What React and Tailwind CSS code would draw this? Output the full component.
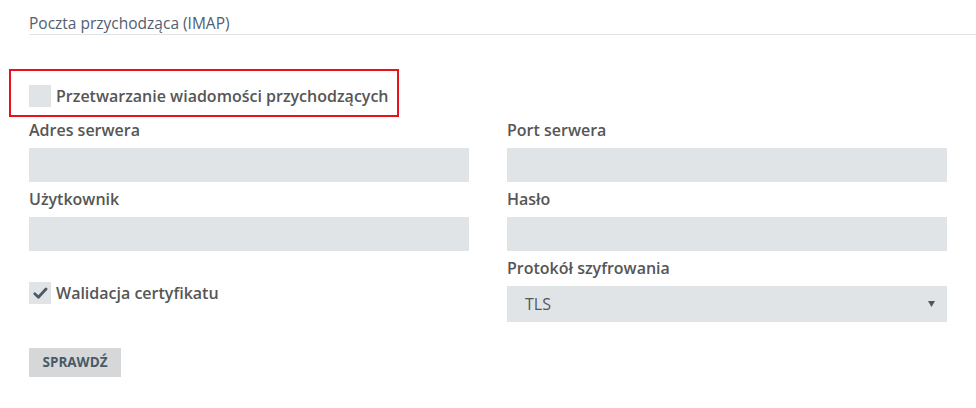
function Checkbox({ checked }) {
  return (
    <span className="flex h-[22px] w-[22px] shrink-0 items-center justify-center bg-[#e1e4e6]">
      {checked && (
        <svg width="15" height="12" viewBox="0 0 15 12" fill="none">
          <path d="M1.8 6.8 L5.4 10.2 L13 2" stroke="#4b5a64" strokeWidth="2.8" strokeLinecap="round" strokeLinejoin="round" />
        </svg>
      )}
    </span>
  );
}

function Field({ label, children }) {
  return (
    <div>
      <label className="block text-[16px] font-semibold leading-6 text-[#565656]">{label}</label>
      <div className="mt-[6px]">{children}</div>
    </div>
  );
}

function TextInput() {
  return <input type="text" className="block h-[34px] w-full bg-[#e1e4e6] px-3 outline-none" />;
}

export default function App() {
  return (
    <div className="min-h-[408px] w-[976px] bg-white font-['Open_Sans',sans-serif]">
      <div className="ml-[29px] border-b border-[#e3e3e3] pt-[13px] pb-[1px]">
        <h3 className="text-[15.5px] font-normal leading-5 text-[#51606f]">Poczta przychodząca (IMAP)</h3>
      </div>

      <div className="ml-[9px] mt-[34px] flex h-[48px] w-[390px] items-start border-2 border-[#e8101a] pl-[18px] pt-[13px]">
        <label className="flex items-center gap-[5px]">
          <Checkbox />
          <span className="text-[16px] font-semibold leading-6 text-[#565656]">Przetwarzanie wiadomości przychodzących</span>
        </label>
      </div>

      <div className="mt-[1px] grid grid-cols-2 gap-x-[38px] gap-y-[5px] pl-[29px] pr-[29px]">
        <Field label="Adres serwera">
          <TextInput />
        </Field>
        <Field label="Port serwera">
          <TextInput />
        </Field>
        <Field label="Użytkownik">
          <TextInput />
        </Field>
        <Field label="Hasło">
          <TextInput />
        </Field>
        <div className="pt-[25px]">
          <label className="flex items-center gap-[5px]">
            <Checkbox checked />
            <span className="text-[16px] font-semibold leading-6 text-[#565656]">Walidacja certyfikatu</span>
          </label>
        </div>
        <Field label="Protokół szyfrowania">
          <div className="flex h-[36px] w-full items-center justify-between bg-[#e1e4e6] pl-[18px] pr-[12px]">
            <span className="text-[16px] leading-5 text-[#565656]">TLS</span>
            <svg width="7" height="6" viewBox="0 0 7 6">
              <polygon points="0,0 7,0 3.5,6" fill="#4b5a60" />
            </svg>
          </div>
        </Field>
      </div>

      <div className="pl-[29px] pt-[26px]">
        <button type="button" className="h-[29px] w-[92px] bg-[#d5d7d8] text-[13.5px] font-bold leading-none text-[#4b5a66]">
          SPRAWDŹ
        </button>
      </div>
    </div>
  );
}
